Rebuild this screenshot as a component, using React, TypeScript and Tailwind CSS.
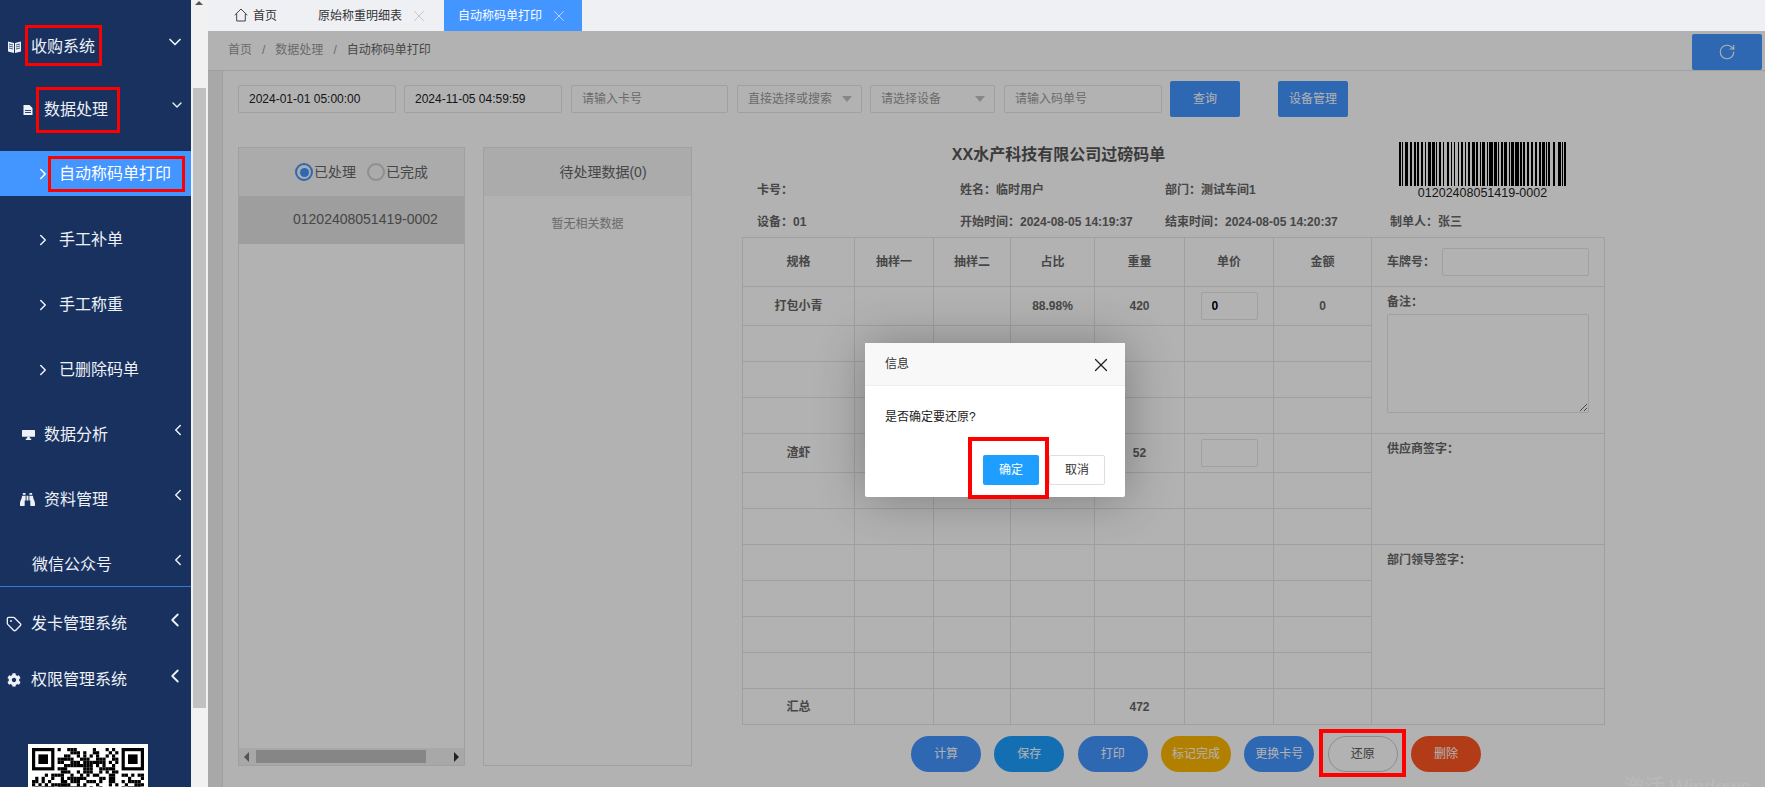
import type { ReactNode } from 'react'
import { ChevronDown, ChevronLeft, ChevronRight, RotateCw, Tag, X } from 'lucide-react'
import { FaBinoculars, FaCog } from 'react-icons/fa'

// 标注框:截图上的红色框,盖在内容之上
function Mark({ className }: { className: string }) {
  return <span className={`absolute z-30 border-[3px] border-[#f00] pointer-events-none ${className}`} />
}

function BookIcon() {
  return (
    <svg width="13" height="13" viewBox="0 0 13 13" fill="#eef2f8">
      <path d="M0 1.5 6 3v10L0 11.5zM7 3l6-1.5v10L7 13z" />
      <path d="M1 4l4 1M1 6l4 1M1 8l4 1M8 5l4-1M8 7l4-1M8 9l4-1" stroke="#19315f" strokeWidth="0.8" />
    </svg>
  )
}

function FileIcon() {
  return (
    <svg width="10" height="10" viewBox="0 0 10 10" fill="#eef2f8">
      <path d="M0.5 0h6L9.5 3v7h-9z" />
      <path d="M2 5.5h6M2 7.5h6" stroke="#19315f" strokeWidth="0.9" />
    </svg>
  )
}

function MonitorIcon() {
  return (
    <svg width="13" height="10" viewBox="0 0 13 10" fill="#eef2f8">
      <rect x="0" y="0" width="13" height="6.8" rx="0.6" />
      <path d="M5.2 6.8h2.6v1.7h1.4V10H3.8V8.5h1.4z" />
    </svg>
  )
}

function SubItem({ label }: { label: string }) {
  return (
    <div className="flex h-[65px] items-center pl-[34px] text-[16px] leading-[20px]">
      <ChevronRight size={18} strokeWidth={2} className="shrink-0" />
      <span className="ml-[7px]">{label}</span>
    </div>
  )
}

function NavGroup({ icon, label }: { icon: ReactNode; label: string }) {
  return (
    <div className="flex h-[65px] items-center text-[16px] leading-[20px]">
      <span className="flex w-[44px] shrink-0 justify-end pr-[9px]">{icon}</span>
      <span>{label}</span>
      <ChevronLeft size={18} strokeWidth={2} className="ml-auto mb-[10px] mr-[4.5px]" />
    </div>
  )
}

function Sidebar() {
  return (
    <aside className="h-full w-[191px] shrink-0 overflow-hidden bg-[#19315f] pt-[15px] text-[#eef2f8]">
      <div className="flex h-[63px] items-center text-[16px] leading-[20px]">
        <span className="flex w-[31px] shrink-0 pl-[8px]">
          <BookIcon />
        </span>
        <span className="relative">
          收购系统
          <Mark className="left-[-6px] right-[-7px] top-[-12px] bottom-[-9px]" />
        </span>
        <ChevronDown size={20} strokeWidth={2} className="ml-auto mb-[10px] mr-[6px]" />
      </div>
      <div className="flex h-[63px] items-center text-[16px] leading-[20px]">
        <span className="flex w-[44px] shrink-0 pl-[23px]">
          <FileIcon />
        </span>
        <span className="relative">
          数据处理
          <Mark className="left-[-8px] right-[-12px] top-[-13px] bottom-[-13px]" />
        </span>
        <ChevronDown size={16} strokeWidth={2} className="ml-auto mb-[10px] mr-[6px]" />
      </div>
      <div className="mt-[10px] mb-[11px] flex h-[45px] items-center bg-[#4395ff] pl-[34px] text-[16px] leading-[20px] text-white">
        <ChevronRight size={18} strokeWidth={2} className="shrink-0" />
        <span className="relative ml-[7px]">
          自动称码单打印
          <Mark className="left-[-11px] right-[-14px] top-[-8px] bottom-[-8px]" />
        </span>
      </div>
      <SubItem label="手工补单" />
      <SubItem label="手工称重" />
      <SubItem label="已删除码单" />
      <NavGroup icon={<MonitorIcon />} label="数据分析" />
      <NavGroup icon={<FaBinoculars size={15} />} label="资料管理" />
      <div className="flex h-[55px] items-start border-b border-[#3b78d8] pl-[32px] pt-[23px] text-[16px] leading-[20px]">
        <span>微信公众号</span>
        <ChevronLeft size={18} strokeWidth={2} className="ml-auto mt-[-4px] mr-[4.5px]" />
      </div>
      <div className="mt-[8px] flex h-[57px] items-center text-[16px] leading-[20px]">
        <span className="flex w-[31px] shrink-0 pl-[6px]">
          <Tag size={16} strokeWidth={2} />
        </span>
        <span>发卡管理系统</span>
        <ChevronLeft size={22} strokeWidth={2} className="ml-auto mb-[8px] mr-[5px]" />
      </div>
      <div className="flex h-[56px] items-center text-[16px] leading-[20px]">
        <span className="flex w-[31px] shrink-0 pl-[7px]">
          <FaCog size={14} />
        </span>
        <span>权限管理系统</span>
        <ChevronLeft size={22} strokeWidth={2} className="ml-auto mb-[8px] mr-[5px]" />
      </div>
      <div className="ml-[28px] mt-[36px]">
        <QrCode />
      </div>
    </aside>
  )
}

function QrCode() {
  const n = 35
  const m = 3.2
  const dark: [number, number][] = []
  let seed = 7
  const inFinder = (x: number, y: number) => (y < 8 && (x < 8 || x >= n - 8)) || (y >= n - 8 && x < 8)
  for (let y = 0; y < n; y++) {
    for (let x = 0; x < n; x++) {
      seed = (seed * 1103515245 + 12345) & 0x7fffffff
      if (!inFinder(x, y) && (seed >> 16) % 100 < 52) dark.push([x, y])
    }
  }
  const finder = (fx: number, fy: number) => (
    <g key={`${fx}-${fy}`}>
      <rect x={fx * m} y={fy * m} width={7 * m} height={7 * m} fill="#000" />
      <rect x={(fx + 1) * m} y={(fy + 1) * m} width={5 * m} height={5 * m} fill="#fff" />
      <rect x={(fx + 2) * m} y={(fy + 2) * m} width={3 * m} height={3 * m} fill="#000" />
    </g>
  )
  return (
    <svg width="120" height="120" viewBox="-4 -4 120 120" className="block bg-white">
      {dark.map(([x, y]) => (
        <rect key={`${x}.${y}`} x={x * m} y={y * m} width={m} height={m} fill="#000" />
      ))}
      {finder(0, 0)}
      {finder(n - 7, 0)}
      {finder(0, n - 7)}
    </svg>
  )
}

function Tabs() {
  return (
    <div className="flex h-[31px] shrink-0 bg-[#eff0f3] text-[12px] text-[#333]">
      <div className="flex items-center pl-[26px]">
        <svg width="14" height="14" viewBox="0 0 14 14" fill="none" stroke="#444" strokeWidth="1" className="mb-[1px]">
          <path d="M0.7 7.2 7 1l6.3 6.2M2.7 5.8V13h8.6V5.8" />
        </svg>
        <span className="ml-[5px]">首页</span>
      </div>
      <div className="ml-[41px] flex items-center">
        <span>原始称重明细表</span>
        <X size={18} strokeWidth={1.1} className="ml-[8px] text-[#bbb]" />
      </div>
      <div className="ml-[16px] flex h-[31px] w-[138px] items-center bg-[#4395ff] pl-[14px] text-white">
        <span>自动称码单打印</span>
        <X size={18} strokeWidth={1.1} className="ml-[8px] text-[#cfe3ff]" />
      </div>
    </div>
  )
}

function TextBox({ className, value, placeholder }: { className: string; value?: string; placeholder?: string }) {
  return (
    <input
      readOnly
      defaultValue={value}
      placeholder={placeholder}
      className={`mt-[4px] h-[28px] rounded-[2px] border border-[#e6e6e6] bg-white pl-[10px] text-[12px] text-[#222] outline-none placeholder:text-[#999] ${className}`}
    />
  )
}

function SelectBox({ className, label }: { className: string; label: string }) {
  return (
    <div
      className={`mt-[4px] flex h-[28px] w-[125px] items-center rounded-[2px] border border-[#e6e6e6] bg-white pl-[10px] text-[12px] text-[#999] ${className}`}
    >
      <span>{label}</span>
      <span className="ml-auto mr-[9px] h-0 w-0 border-x-[5px] border-t-[6px] border-x-transparent border-t-[#c2c2c2]" />
    </div>
  )
}

function FilterBar() {
  return (
    <div className="flex h-[36px] items-start">
      <TextBox className="w-[158px]" value="2024-01-01 05:00:00" />
      <TextBox className="ml-[8px] w-[158px]" value="2024-11-05 04:59:59" />
      <TextBox className="ml-[9px] w-[157px]" placeholder="请输入卡号" />
      <SelectBox className="ml-[9px]" label="直接选择或搜索" />
      <SelectBox className="ml-[8px]" label="请选择设备" />
      <TextBox className="ml-[9px] w-[158px]" placeholder="请输入码单号" />
      <button className="ml-[8px] h-[36px] w-[70px] rounded-[2px] bg-[#4395ff] text-[12px] text-white">查询</button>
      <button className="ml-[38px] h-[36px] w-[70px] rounded-[2px] bg-[#4395ff] text-[12px] text-white">设备管理</button>
    </div>
  )
}

function RecordPanel() {
  return (
    <div className="flex h-[619px] w-[227px] shrink-0 flex-col border border-[#e6e6e6]">
      <div className="flex h-[48px] shrink-0 items-center bg-[#f5f5f5] pl-[56px] text-[14px] text-[#666]">
        <span className="flex h-[18px] w-[18px] items-center justify-center rounded-full border-2 border-[#4395ff]">
          <span className="h-[9px] w-[9px] rounded-full bg-[#4395ff]" />
        </span>
        <span className="ml-[1px]">已处理</span>
        <span className="ml-[11px] h-[18px] w-[18px] rounded-full border-2 border-[#ccc]" />
        <span className="ml-[1px]">已完成</span>
      </div>
      <div className="flex h-[48px] shrink-0 items-center bg-[#e2e2e2] pb-[1px] pl-[54px] text-[14px] text-[#666]">
        01202408051419-0002
      </div>
      <div className="flex-1" />
      <div className="flex h-[17px] shrink-0 items-center bg-[#f1f1f1]">
        <span className="ml-[5px] h-0 w-0 border-y-[5px] border-r-[5px] border-y-transparent border-r-[#777]" />
        <span className="ml-[7px] h-[13px] w-[170px] bg-[#c1c1c1]" />
        <span className="ml-auto mr-[5px] h-0 w-0 border-y-[5px] border-l-[5px] border-y-transparent border-l-[#333]" />
      </div>
    </div>
  )
}

function PendingPanel() {
  return (
    <div className="ml-[18px] h-[619px] w-[209px] shrink-0 border border-[#e6e6e6]">
      <div className="flex h-[48px] items-center justify-center bg-[#f5f5f5] pl-[31px] text-[14px] text-[#666]">待处理数据(0)</div>
      <div className="mt-[18px] text-center text-[12px] leading-[20px] text-[#999]">暂无相关数据</div>
    </div>
  )
}

// Code128:C 段 + B 段的 "-" + C 段,共 167 模块
const BARCODE = [
  '211232', '222122', '221231', '311222', '132212', '131222', '122231', '221132', '114131', '122132', '113141', '212222',
  '222221', '311123', '2331112',
]

function Barcode() {
  const rects: { x: number; w: number }[] = []
  let x = 0
  BARCODE.join('')
    .split('')
    .forEach((c, i) => {
      const w = Number(c)
      if (i % 2 === 0) rects.push({ x, w })
      x += w
    })
  return (
    <svg width="167" height="44" viewBox="0 0 167 44" shapeRendering="crispEdges" className="block">
      {rects.map((r) => (
        <rect key={r.x} x={r.x} y={0} width={r.w} height={44} fill="#000" />
      ))}
    </svg>
  )
}

function DocHeader() {
  return (
    <div className="flex h-[90px] text-[12px] font-bold leading-[16px] text-[#666]">
      <div className="w-[648px] shrink-0">
        <div className="w-[633px] text-center text-[16px] text-[#555]">XX水产科技有限公司过磅码单</div>
        <div className="mt-[19px] grid grid-cols-[203px_205px_225px] pl-[15px]">
          <span>卡号&#xFF1A;</span>
          <span>姓名&#xFF1A;临时用户</span>
          <span>部门&#xFF1A;测试车间1</span>
        </div>
        <div className="mt-[16px] grid grid-cols-[203px_205px_225px] pl-[15px]">
          <span>设备&#xFF1A;01</span>
          <span>开始时间&#xFF1A;2024-08-05 14:19:37</span>
          <span>结束时间&#xFF1A;2024-08-05 14:20:37</span>
        </div>
      </div>
      <div className="mt-[-5px]">
        <div className="ml-[9px]">
          <Barcode />
          <div className="w-[167px] text-center text-[12.5px] font-normal leading-[15px] text-[#222]">01202408051419-0002</div>
        </div>
        <div className="mt-[13px]">制单人&#xFF1A;张三</div>
      </div>
    </div>
  )
}

const CELL = 'border border-[#e4e4e4] p-0 text-center align-middle'

function Blank({ n = 7 }: { n?: number }) {
  return (
    <>
      {Array.from({ length: n }).map((_, i) => (
        <td key={i} className={CELL} />
      ))}
    </>
  )
}

function PriceInput({ value }: { value?: string }) {
  return (
    <input
      readOnly
      defaultValue={value}
      className="ml-[15.5px] block h-[28px] w-[57px] rounded-[2px] border border-[#e6e6e6] bg-white pl-[10px] text-[12px] font-bold text-black outline-none"
    />
  )
}

function DocTable() {
  return (
    <table className="w-[862px] table-fixed border-collapse text-[12px] font-bold text-[#666]">
      <colgroup>
        <col className="w-[112px]" />
        <col className="w-[79px]" />
        <col className="w-[77px]" />
        <col className="w-[84px]" />
        <col className="w-[90px]" />
        <col className="w-[89px]" />
        <col className="w-[98px]" />
        <col className="w-[233px]" />
      </colgroup>
      <tbody>
        <tr className="h-[49px]">
          {['规格', '抽样一', '抽样二', '占比', '重量', '单价', '金额'].map((h) => (
            <td key={h} className={CELL}>
              {h}
            </td>
          ))}
          <td className="border border-[#e4e4e4] pl-[15px]">
            <div className="flex items-center">
              <span>车牌号&#xFF1A;</span>
              <input readOnly className="ml-[7px] h-[28px] w-[147px] rounded-[2px] border border-[#e6e6e6] bg-white outline-none" />
            </div>
          </td>
        </tr>
        <tr className="h-[39px]">
          <td className={CELL}>打包小青</td>
          <td className={CELL} />
          <td className={CELL} />
          <td className={CELL}>88.98%</td>
          <td className={CELL}>420</td>
          <td className="border border-[#e4e4e4] p-0">
            <PriceInput value="0" />
          </td>
          <td className={CELL}>0</td>
          <td rowSpan={4} className="border border-[#e4e4e4] pl-[15px] align-top">
            <div className="mt-[7px] leading-[16px]">备注&#xFF1A;</div>
            <textarea readOnly className="mt-[4px] block h-[99px] w-[202px] rounded-[2px] border border-[#e6e6e6] bg-white outline-none" />
          </td>
        </tr>
        <tr className="h-[36px]">
          <Blank />
        </tr>
        <tr className="h-[36px]">
          <Blank />
        </tr>
        <tr className="h-[36px]">
          <Blank />
        </tr>
        <tr className="h-[39px]">
          <td className={CELL}>渣虾</td>
          <td className={CELL} />
          <td className={CELL} />
          <td className={CELL}>11.02%</td>
          <td className={CELL}>52</td>
          <td className="border border-[#e4e4e4] p-0">
            <PriceInput />
          </td>
          <td className={CELL} />
          <td rowSpan={3} className="border border-[#e4e4e4] pl-[15px] pt-[7px] align-top leading-[16px]">
            供应商签字&#xFF1A;
          </td>
        </tr>
        <tr className="h-[36px]">
          <Blank />
        </tr>
        <tr className="h-[36px]">
          <Blank />
        </tr>
        <tr className="h-[36px]">
          <Blank />
          <td rowSpan={4} className="border border-[#e4e4e4] pl-[15px] pt-[7px] align-top leading-[16px]">
            部门领导签字&#xFF1A;
          </td>
        </tr>
        <tr className="h-[36px]">
          <Blank />
        </tr>
        <tr className="h-[36px]">
          <Blank />
        </tr>
        <tr className="h-[36px]">
          <Blank />
        </tr>
        <tr className="h-[36px]">
          <td className={CELL}>汇总</td>
          <td className={CELL} />
          <td className={CELL} />
          <td className={CELL} />
          <td className={CELL}>472</td>
          <td className={CELL} />
          <td className={CELL} />
          <td className={CELL} />
        </tr>
      </tbody>
    </table>
  )
}

function Actions() {
  const pill = 'relative h-[36px] w-[70px] rounded-[18px] text-[12px] text-white'
  return (
    <div className="mt-[11px] flex gap-[13.33px] pl-[169px]">
      <button className={`${pill} bg-[#4395ff]`}>计算</button>
      <button className={`${pill} bg-[#1e9fff]`}>保存</button>
      <button className={`${pill} bg-[#4395ff]`}>打印</button>
      <button className={`${pill} bg-[#ffb800]`}>标记完成</button>
      <button className={`${pill} bg-[#4395ff]`}>更换卡号</button>
      <button className="relative h-[36px] w-[70px] rounded-[18px] border border-[#c9c9c9] bg-white text-[12px] text-[#555]">
        还原
        <Mark className="left-[-10px] right-[-9px] top-[-8px] bottom-[-6px] border-[4px]" />
      </button>
      <button className={`${pill} bg-[#ff5722]`}>删除</button>
    </div>
  )
}

function ConfirmDialog() {
  return (
    <div className="absolute left-[865px] top-[343px] z-20 h-[154px] w-[260px] rounded-[2px] bg-white shadow-[1px_1px_50px_rgba(0,0,0,0.3)]">
      <div className="flex h-[43px] items-center justify-between border-b border-[#eee] bg-[#f8f8f8] pl-[20px] pr-[13px] text-[12px] text-[#333]">
        <span>信息</span>
        <X size={22} strokeWidth={1.3} className="mt-[1px] text-[#222]" />
      </div>
      <div className="pl-[20px] pt-[21px] text-[12px] leading-[20px] text-[#222]">是否确定要还原?</div>
      <div className="mt-[28px] flex justify-end gap-[10px] pr-[20px] text-[12px]">
        <button className="relative h-[30px] w-[56px] rounded-[2px] bg-[#1e9fff] text-white">
          确定
          <Mark className="left-[-15px] right-[-10px] top-[-18px] bottom-[-14px] border-[4px]" />
        </button>
        <button className="h-[30px] w-[56px] rounded-[2px] border border-[#dedede] bg-white text-[#333]">取消</button>
      </div>
    </div>
  )
}

export default function App() {
  return (
    <div className="relative flex h-[787px] w-[1765px] overflow-hidden bg-white font-['Liberation_Sans','Noto_Sans_CJK_SC',sans-serif]">
      <Sidebar />
      {/* 外层页面滚动条 */}
      <div className="relative h-full w-[17px] shrink-0 bg-[#f1f1f1]">
        <span className="absolute left-[4px] top-[1px] h-0 w-0 border-x-[4px] border-b-[4px] border-x-transparent border-b-[#555]" />
        <div className="ml-[2px] mt-[88px] h-[620px] w-[13px] bg-[#c1c1c1]" />
      </div>
      <main className="flex h-full min-w-0 flex-1 flex-col">
        <Tabs />
        <div className="flex h-[40px] shrink-0 items-end justify-between border-b border-[#e6e6e6] bg-white pl-[20px] pr-[3px]">
          <div className="mb-[11px] flex gap-[10px] text-[12px] leading-[18px] text-[#999]">
            <span>首页</span>
            <span>/</span>
            <span>数据处理</span>
            <span>/</span>
            <span className="text-[#666]">自动称码单打印</span>
          </div>
          <button className="flex h-[36px] w-[70px] items-center justify-center rounded-[2px] bg-[#4395ff] text-white">
            <RotateCw size={18} strokeWidth={1.5} />
          </button>
        </div>
        <div className="flex min-h-0 flex-1">
          <div className="w-[15px] shrink-0 border-r border-[#e6e6e6] bg-[#f1f1f1]" />
          <div className="flex-1 bg-white pl-[15px] pt-[10px]">
            <FilterBar />
            <div className="mt-[30px] flex">
              <RecordPanel />
              <PendingPanel />
              <div className="ml-[50px] w-[862px]">
                <DocHeader />
                <DocTable />
                <Actions />
              </div>
            </div>
          </div>
        </div>
      </main>
      {/* 弹窗遮罩 */}
      <div className="absolute bottom-0 left-[208px] right-0 top-[31px] z-10 bg-black/30" />
      <div className="absolute right-[14px] top-[775px] z-10 text-[20px] leading-[24px] text-white/10">激活 Windows</div>
      <ConfirmDialog />
    </div>
  )
}
